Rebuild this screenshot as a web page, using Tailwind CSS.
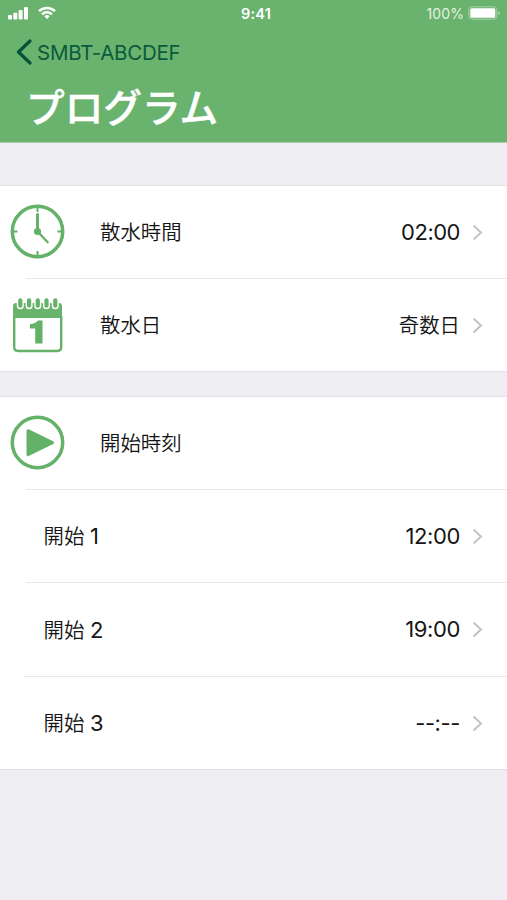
<!DOCTYPE html>
<html lang="ja">
<head>
<meta charset="utf-8">
<title>プログラム</title>
<script src="https://cdn.jsdelivr.net/npm/@tailwindcss/browser@4"></script>
</head>
<body class="w-[507px] h-[900px] overflow-hidden bg-[#eeedf2] font-['Inter','Noto_Sans_CJK_JP',sans-serif] text-[#151515]">
<header class="h-[143px] bg-[#6ab36e] border-b border-[#a9cfae] flex flex-col">
  <div class="h-7 grid grid-cols-3 items-center pl-2 pr-[7px] text-white">
    <div class="flex items-center gap-[9px] pb-[2px]">
      <svg class="w-[21px] h-[14px]" viewBox="0 0 21 14" fill="white"><rect x="0" y="9" width="4" height="4.5" rx="1"/><rect x="5.3" y="6.800" width="4" height="6.700" rx="1"/><rect x="10.600" y="4" width="4" height="9.500" rx="1"/><rect x="16" y="1" width="4" height="12.500" rx="1"/></svg>
      <svg class="w-[18px] h-[14px]" viewBox="0 0 18 14" fill="none" stroke="white" stroke-width="2.500"><path d="M1 5.200a11.400 11.400 0 0 1 16 0M4 8.400a7.100 7.100 0 0 1 10 0"/><path d="M9 13l-2.700-2.700a3.900 3.900 0 0 1 5.400 0z" fill="white" stroke="none"/></svg>
    </div>
    <div class="text-center text-[14.500px] leading-5 font-semibold tracking-[0.200px] pl-1">9:41</div>
    <div class="flex items-center justify-end gap-1 pb-[2px]">
      <span class="text-[14px] leading-5 text-[#e2f2e3] tracking-[0.1px] pt-px">100%</span>
      <svg class="w-[32px] h-[14px]" viewBox="0 0 32 14"><rect x="0.800" y="0.800" width="28" height="12.400" rx="3" fill="none" stroke="#a7d3a9"/><rect x="2.300" y="2.300" width="25" height="9.400" rx="1.500" fill="white"/><path d="M30.300 5v4q1.500-.5 1.500-2t-1.500-2z" fill="#b5dab7"/></svg>
    </div>
  </div>
  <div class="flex items-center h-12 pl-4 text-[#0b5a3d]">
    <svg class="w-[17px] h-[26px] mr-[4px]" viewBox="0 0 17 26" fill="none" stroke="#07523a" stroke-width="3.200" stroke-linecap="round" stroke-linejoin="round"><path d="M14 2L2.500 13l11.500 11"/></svg>
    <span class="text-[20.500px] tracking-[-0.250px] pt-[2px]">SMBT-ABCDEF</span>
  </div>
  <h1 class="pl-[26px] text-[38.700px] leading-[58px] font-medium text-white [-webkit-text-stroke:0.5px_white] font-['Noto_Sans_CJK_JP',sans-serif]">プログラム</h1>
</header>
<main class="pt-[42px] text-[20.400px]">
  <section class="bg-white border-y border-[#e1e1e5]">
    <div class="h-[92px] flex items-center pl-[10px] pr-6">
      <svg class="w-[55px] h-[55px] mr-[35px] mb-px" viewBox="0 0 55 55" fill="none" stroke="#64b168"><circle cx="27.500" cy="27.500" r="25.200" stroke-width="3.500"/><path d="M27.500 3v5M27.500 47v5M3 27.500h4.500M47.500 27.500h4.500" stroke-width="2"/><path d="M27.500 10.500v17" stroke-width="3" stroke-linecap="round"/><path d="M27.500 27.500l10.200 10.700" stroke-width="2.300" stroke-linecap="round"/><circle cx="27.500" cy="27.500" r="3.600" fill="#64b168" stroke="none"/></svg>
      <span class="flex-1 pt-[3px] font-[350]">散水時間</span><span class="text-[22px] tracking-[-0.500px]">02:00</span>
      <svg class="w-[11px] h-[17px] ml-3" viewBox="0 0 11 17" fill="none" stroke="#c3c3c6" stroke-width="2"><path d="M1.500 1.500l7.500 7-7.500 7"/></svg>
    </div>
    <div class="ml-[26px] h-px bg-[#e9e9ea]"></div>
    <div class="h-[92px] flex items-center pl-[12px] pr-6">
      <svg class="w-[52px] h-[56px] mr-[36px]" viewBox="0 0 52 56"><path d="M1 9q0-3 3-3h43q3 0 3 3v12H1z" fill="#69b46d"/><path d="M2.200 19v31q0 4 4 4h39q4 0 4-4V19" fill="none" stroke="#64b168" stroke-width="2.400"/><g fill="#64b168" stroke="white" stroke-width="1.400"><rect x="5.500" y="0.500" width="5.600" height="11" rx="2.800"/><rect x="14.300" y="0.500" width="5.600" height="11" rx="2.800"/><rect x="23" y="0.500" width="5.600" height="11" rx="2.800"/><rect x="31.700" y="0.500" width="5.600" height="11" rx="2.800"/><rect x="40.500" y="0.500" width="5.600" height="11" rx="2.800"/></g><path d="M26 23.500h4.500V46.500h-7.300V31.500h-5.200v-4.600q5.400 0 8-3.400z" fill="#64b168"/></svg>
      <span class="flex-1 pt-[3px] font-[350]">散水日</span><span class="pt-[3px] font-[350]">奇数日</span>
      <svg class="w-[11px] h-[17px] ml-3" viewBox="0 0 11 17" fill="none" stroke="#c3c3c6" stroke-width="2"><path d="M1.500 1.500l7.500 7-7.500 7"/></svg>
    </div>
  </section>
  <section class="mt-[24px] bg-white border-y border-[#e1e1e5]">
    <div class="h-[92px] flex items-center pl-[10px] pr-6">
      <svg class="w-[55px] h-[55px] mr-[35px] mb-px" viewBox="0 0 55 55"><circle cx="27.500" cy="27.500" r="25.200" fill="none" stroke="#64b168" stroke-width="3.500"/><path d="M18 15.700l24.500 12L18 39.700z" fill="#64b168" stroke="#64b168" stroke-width="3" stroke-linejoin="round"/></svg>
      <span class="flex-1 pt-[3px] font-[350]">開始時刻</span>
    </div>
    <div class="ml-[26px] h-px bg-[#e9e9ea]"></div>
    <div class="h-[92px] flex items-center pl-[43.500px] pr-6">
      <span class="flex-1 pt-px font-[350]">開始 <span class="text-[22px] font-normal">1</span></span><span class="text-[22px] tracking-[-0.400px]">12:00</span>
      <svg class="w-[11px] h-[17px] ml-3" viewBox="0 0 11 17" fill="none" stroke="#c3c3c6" stroke-width="2"><path d="M1.500 1.500l7.500 7-7.500 7"/></svg>
    </div>
    <div class="ml-[26px] h-px bg-[#e9e9ea]"></div>
    <div class="h-[93px] flex items-center pl-[43.500px] pr-6">
      <span class="flex-1 pt-px font-[350]">開始 <span class="text-[22px] font-normal">2</span></span><span class="text-[22px] tracking-[-0.400px]">19:00</span>
      <svg class="w-[11px] h-[17px] ml-3" viewBox="0 0 11 17" fill="none" stroke="#c3c3c6" stroke-width="2"><path d="M1.500 1.500l7.500 7-7.500 7"/></svg>
    </div>
    <div class="ml-[24px] h-px bg-[#e9e9ea]"></div>
    <div class="h-[92px] flex items-center pl-[43.500px] pr-6">
      <span class="flex-1 font-[350]">開始 <span class="text-[22px] font-normal">3</span></span><span class="text-[22px] tracking-[-0.400px]">--:--</span>
      <svg class="w-[11px] h-[17px] ml-3" viewBox="0 0 11 17" fill="none" stroke="#c3c3c6" stroke-width="2"><path d="M1.500 1.500l7.500 7-7.500 7"/></svg>
    </div>
  </section>
</main>
</body>
</html>
